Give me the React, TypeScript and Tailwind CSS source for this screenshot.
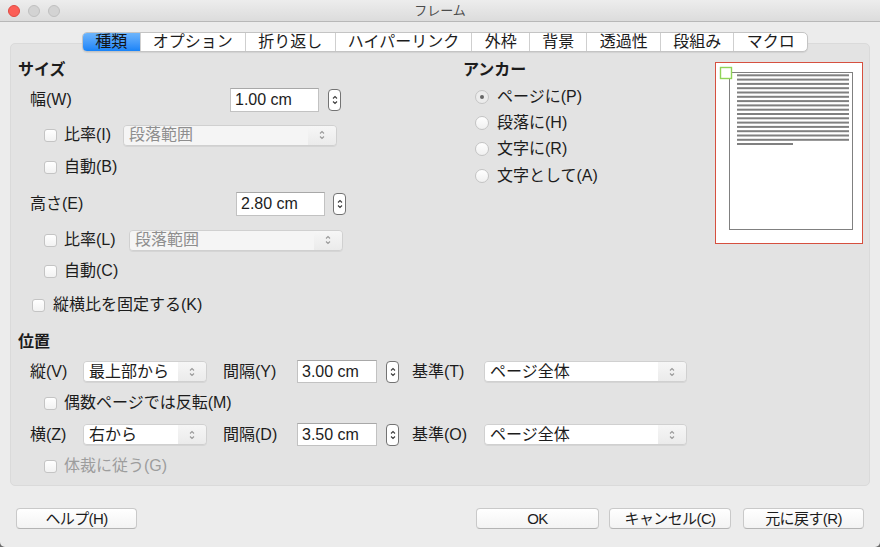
import React from 'react';

const tabs = ['種類', 'オプション', '折り返し', 'ハイパーリンク', '外枠', '背景', '透過性', '段組み', 'マクロ'];

function Chevrons({ color = '#9a9a9a' }: { color?: string }) {
  return (
    <svg width="8" height="14" viewBox="0 0 8 14" fill="none" stroke={color} strokeWidth="1.1">
      <path d="M2 5.5 L4 3.5 L6 5.5" />
      <path d="M2 8.5 L4 10.5 L6 8.5" />
    </svg>
  );
}

function Spin() {
  return (
    <span className="flex items-center justify-center w-[13px] h-[22px] rounded-[4px] border border-[#737373] bg-white shrink-0">
      <Chevrons color="#3c3c3c" />
    </span>
  );
}

function Box() {
  return <span className="w-[13px] h-[13px] rounded-[3px] border border-[#c4c4c4] bg-gradient-to-b from-white to-[#f2f2f2] shrink-0" />;
}

function Check({ label, disabled }: { label: string; disabled?: boolean }) {
  return (
    <div className="flex items-center h-[20px]">
      <Box />
      <span className={disabled ? 'ml-[7px] text-[#9d9d9d]' : 'ml-[7px]'}>{label}</span>
    </div>
  );
}

function Radio({ label, checked }: { label: string; checked?: boolean }) {
  return (
    <div className="flex items-center h-[20px] pl-[12px]">
      <span
        className={
          checked
            ? 'flex items-center justify-center w-[14px] h-[14px] rounded-full border border-[#c4c4c4] bg-[#ececec] shrink-0'
            : 'flex items-center justify-center w-[14px] h-[14px] rounded-full border border-[#c4c4c4] bg-gradient-to-b from-white to-[#f0f0f0] shrink-0'
        }
      >
        {checked && <span className="w-[4px] h-[4px] rounded-full bg-[#666666]" />}
      </span>
      <span className="ml-[8px]">{label}</span>
    </div>
  );
}

function Select({ value, className, disabled }: { value: string; className: string; disabled?: boolean }) {
  return (
    <div className={`flex items-stretch h-[21px] rounded-[4px] border border-[#d0d0d0] shadow-[0_1px_0_rgba(0,0,0,0.06)] overflow-hidden shrink-0 ${className}`}>
      <span
        className={
          disabled
            ? 'flex-1 flex items-center pl-[5px] bg-[#f5f5f5] text-[#8e8e8e]'
            : 'flex-1 flex items-center pl-[5px] bg-white'
        }
      >
        {value}
      </span>
      <span className="w-[28px] flex items-center justify-center bg-gradient-to-b from-[#f6f6f6] to-[#ebebeb]">
        <Chevrons />
      </span>
    </div>
  );
}

function Input({ value, className }: { value: string; className: string }) {
  return (
    <span className={`flex items-center pl-[4px] bg-white border border-[#c2c2c2] border-t-[#a8a8a8] shrink-0 ${className}`}>
      {value}
    </span>
  );
}

function Button({ label, className }: { label: string; className: string }) {
  return (
    <div
      className={`flex items-center justify-center h-[21px] rounded-[4px] border border-[#c9c9c9] border-b-[#b4b4b4] bg-gradient-to-b from-white to-[#f3f3f3] text-[15px] tracking-[-0.6px] ${className}`}
    >
      {label}
    </div>
  );
}

function Preview() {
  const lines = Array.from({ length: 16 }, (_, i) => 11.3 + i * 4.3);
  return (
    <div className="w-[148px] h-[182px] mt-[2px] border border-[#d6503f] bg-white shrink-0">
      <svg width="146" height="180" viewBox="0 0 146 180">
        <rect x="13.5" y="9.5" width="123" height="157" fill="white" stroke="#808080" strokeWidth="1" />
        {lines.map((y) => (
          <rect key={y} x="21" y={y} width="112" height="2" fill="#808080" />
        ))}
        <rect x="21" y="80" width="56" height="2" fill="#808080" />
        <rect x="4.5" y="4.5" width="11" height="11" fill="white" stroke="#90d458" strokeWidth="1.4" />
      </svg>
    </div>
  );
}

export default function App() {
  return (
    <div className="w-[880px] h-[547px] bg-[#6b6b6b]">
      <div className="w-[880px] h-[547px] bg-[#ececec] rounded-b-[5px] overflow-hidden text-[16px] text-[#1c1c1c] leading-none font-['Liberation_Sans','Noto_Sans_CJK_JP',sans-serif]">
        {/* Title bar */}
        <div className="relative flex items-center justify-center h-[22px] bg-gradient-to-b from-[#ededed] to-[#dcdcdc] border-b border-[#b8b8b8]">
          <div className="absolute left-[8px] top-[5px] flex gap-[8px]">
            <span className="w-[12px] h-[12px] rounded-full bg-[#fc5f57] border border-[#df4a42]" />
            <span className="w-[12px] h-[12px] rounded-full bg-[#d3d3d3] border border-[#c0c0c0]" />
            <span className="w-[12px] h-[12px] rounded-full bg-[#d3d3d3] border border-[#c0c0c0]" />
          </div>
          <span className="text-[13px] text-[#4c4c4c]">フレーム</span>
        </div>

        <div className="px-[10px] pt-[10px]">
          {/* Tabs */}
          <div className="relative z-10 flex pl-[72px] h-[20px]">
            <div className="flex rounded-[5px] border border-[#c4c4c4] bg-white overflow-hidden shadow-[0_1px_1px_rgba(0,0,0,0.08)]">
              {tabs.map((t, i) => (
                <div
                  key={t}
                  className={
                    i === 0
                      ? 'flex items-center px-[12.25px] bg-gradient-to-b from-[#6db5fb] to-[#1683f8] text-[#141414]'
                      : 'flex items-center px-[12.25px] border-l border-[#cfcfcf]'
                  }
                >
                  {t}
                </div>
              ))}
            </div>
          </div>

          {/* Panel */}
          <div className="-mt-[9px] rounded-[5px] bg-[#e3e3e3] border border-[#dadada] pt-[16px] pl-[7px] pr-[6px] pb-[9px]">
            <div className="flex">
              {/* Size */}
              <div className="w-[445px] flex flex-col">
                <div className="h-[20px] flex items-center font-bold">サイズ</div>
                <div className="mt-[8px] h-[24px] flex items-center pl-[12px]">
                  <span className="w-[200px]">幅(W)</span>
                  <Input value="1.00 cm" className="w-[89px] h-[24px]" />
                  <span className="ml-[9px]"><Spin /></span>
                </div>
                <div className="mt-[12px] h-[22px] flex items-center pl-[26px]">
                  <Box />
                  <span className="ml-[7px] w-[59px]">比率(I)</span>
                  <Select value="段落範囲" className="w-[214px]" disabled />
                </div>
                <div className="mt-[11px] pl-[26px]">
                  <Check label="自動(B)" />
                </div>
                <div className="mt-[15px] h-[24px] flex items-center pl-[12px]">
                  <span className="w-[206px]">高さ(E)</span>
                  <Input value="2.80 cm" className="w-[89px] h-[24px]" />
                  <span className="ml-[8px]"><Spin /></span>
                </div>
                <div className="mt-[13px] h-[22px] flex items-center pl-[26px]">
                  <Box />
                  <span className="ml-[7px] w-[65px]">比率(L)</span>
                  <Select value="段落範囲" className="w-[214px]" disabled />
                </div>
                <div className="mt-[10px] pl-[26px]">
                  <Check label="自動(C)" />
                </div>
                <div className="mt-[14px] pl-[14px]">
                  <div className="flex items-center h-[20px]">
                    <Box />
                    <span className="ml-[8px]">縦横比を固定する(K)</span>
                  </div>
                </div>
              </div>

              {/* Anchor */}
              <div className="flex-1 flex flex-col">
                <div className="h-[20px] flex items-center font-bold">アンカー</div>
                <div className="mt-[7px] flex flex-col gap-[6px]">
                  <Radio label="ページに(P)" checked />
                  <Radio label="段落に(H)" />
                  <Radio label="文字に(R)" />
                  <div className="mt-[1px]">
                    <Radio label="文字として(A)" />
                  </div>
                </div>
              </div>

              <Preview />
            </div>

            {/* Position */}
            <div className="mt-[17px] h-[20px] flex items-center font-bold">位置</div>
            <div className="mt-[8px] h-[23px] flex items-center pl-[12px]">
              <span className="w-[53px]">縦(V)</span>
              <Select value="最上部から" className="w-[124px]" />
              <span className="ml-[16px] w-[74px]">間隔(Y)</span>
              <Input value="3.00 cm" className="w-[80px] h-[23px]" />
              <span className="ml-[9px]"><Spin /></span>
              <span className="ml-[13px] w-[72px]">基準(T)</span>
              <Select value="ページ全体" className="w-[203px]" />
            </div>
            <div className="mt-[10px] pl-[26px]">
              <Check label="偶数ページでは反転(M)" />
            </div>
            <div className="mt-[10px] h-[23px] flex items-center pl-[12px]">
              <span className="w-[53px]">横(Z)</span>
              <Select value="右から" className="w-[124px]" />
              <span className="ml-[16px] w-[74px]">間隔(D)</span>
              <Input value="3.50 cm" className="w-[80px] h-[23px]" />
              <span className="ml-[9px]"><Spin /></span>
              <span className="ml-[13px] w-[72px]">基準(O)</span>
              <Select value="ページ全体" className="w-[203px]" />
            </div>
            <div className="mt-[10px] pl-[26px]">
              <Check label="体裁に従う(G)" disabled />
            </div>
          </div>

          {/* Buttons */}
          <div className="mt-[22px] flex px-[6px]">
            <Button label="ヘルプ(H)" className="w-[121px]" />
            <div className="flex-1" />
            <Button label="OK" className="w-[123px]" />
            <Button label="キャンセル(C)" className="w-[122px] ml-[10px]" />
            <Button label="元に戻す(R)" className="w-[121px] ml-[12px]" />
          </div>
        </div>
      </div>
    </div>
  );
}
